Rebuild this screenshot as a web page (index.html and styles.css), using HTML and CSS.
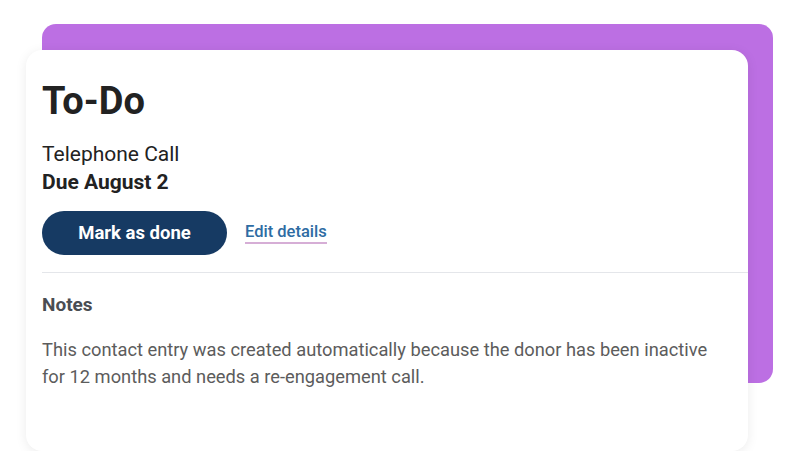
FILE: index.html
```html
<!DOCTYPE html>
<html lang="en">
  <head>
    <meta charset="UTF-8" />
    <meta name="viewport" content="width=device-width, initial-scale=1.0" />
    <title>To-Do</title>
    <link rel="stylesheet" href="styles.css">
  </head>
  <body>
    <div class="stage">
      <div class="backdrop"></div>
      <div class="card">
        <h1>To-Do</h1>
        <p class="task">Telephone Call</p>
        <p class="due">Due August 2</p>
        <div class="actions">
          <button type="button" class="done-btn">Mark as done</button>
          <a href="#" class="edit-link">Edit details</a>
        </div>
        <hr class="divider" />
        <h3>Notes</h3>
        <p class="notes">
          This contact entry was created automatically because the donor has been inactive
          for 12 months and needs a re-engagement call.
        </p>
      </div>
    </div>
  </body>
</html>
```

FILE: styles.css
```css
body {
  font-family: Roboto, "Liberation Sans", sans-serif;
  background-color: #ffffff;
  margin: 0;
  padding: 0;
  color: #222222;
}
.stage {
  display: grid;
  width: 747px;
  padding: 24px 0 0 26px;
}
.backdrop {
  grid-area: 1 / 1;
  margin-left: 16px;
  height: 359px;
  background-color: #bc6fe3;
  border-radius: 14px;
}
.card {
  grid-area: 1 / 1;
  margin: 26px 25px 0 0;
  height: 401px;
  box-sizing: border-box;
  background-color: white;
  border-radius: 16px;
  padding: 29px 0 0 16px;
  box-shadow: 0 2px 12px rgba(0, 0, 0, 0.08);
}
h1 {
  font-size: 38px;
  font-weight: 700;
  margin: 0 0 17px;
  line-height: 44px;
  color: #222222;
}
.task,
.due {
  font-size: 21px;
  line-height: 28px;
  margin: 0;
}
.due {
  font-weight: 700;
}
.actions {
  display: flex;
  align-items: center;
  gap: 18px;
  margin-top: 15px;
}
.done-btn {
  width: 185px;
  height: 44px;
  background-color: #163a63;
  color: white;
  border: none;
  border-radius: 22px;
  font-family: inherit;
  font-size: 18.5px;
  font-weight: 700;
  cursor: pointer;
}
.edit-link {
  color: #2e6ca3;
  font-size: 16.5px;
  font-weight: 500;
  text-decoration: none;
  border-bottom: 2px solid #d6aed6;
  padding-bottom: 1px;
}
.divider {
  border: none;
  border-top: 1px solid #e4e6ea;
  margin: 17px 0 0;
}
h3 {
  font-size: 19px;
  font-weight: 700;
  color: #4a4d52;
  margin: 20px 0 0;
  line-height: 24px;
}
.notes {
  font-size: 18.3px;
  line-height: 27px;
  color: #5c5c5c;
  margin: 19px 16px 0 0;
}
```
